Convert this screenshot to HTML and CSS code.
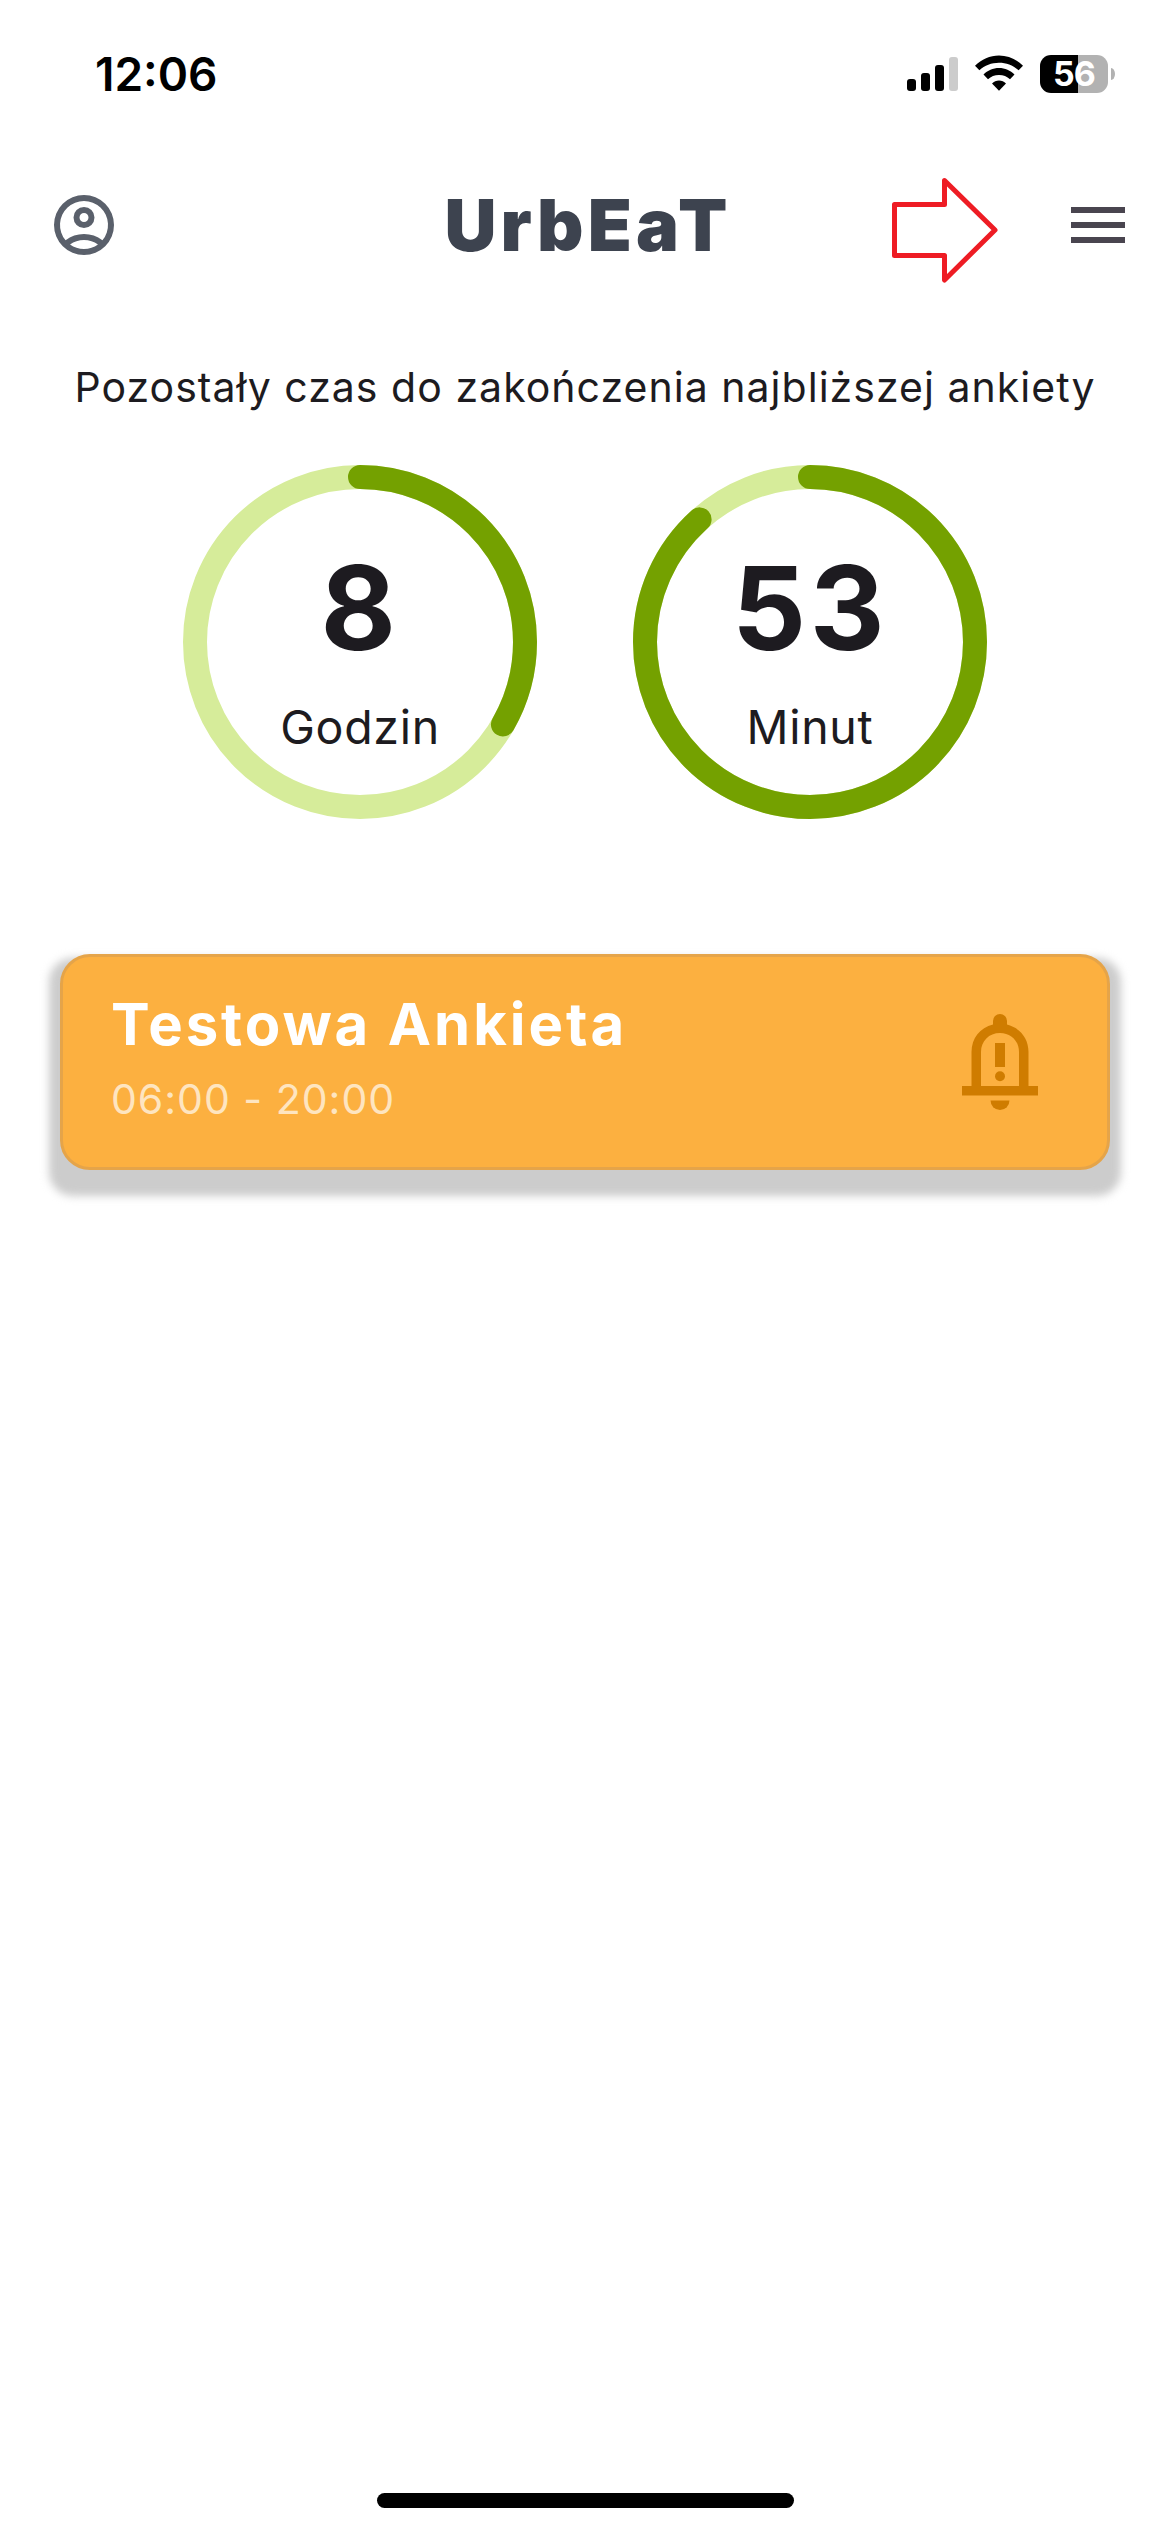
FILE: index.html
```html
<!DOCTYPE html>
<html lang="pl">
<head>
<meta charset="utf-8">
<title>UrbEaT</title>
<link rel="stylesheet" href="styles.css">
</head>
<body>
<div class="screen">
  <div class="status-bar">
    <span class="clock">12:06</span>
    <div class="status-icons">
      <svg class="signal" viewBox="0 0 51 34" width="51" height="34">
        <rect x="0" y="22" width="9" height="12" rx="3"/>
        <rect x="14" y="16" width="9" height="18" rx="3"/>
        <rect x="28" y="8" width="9" height="26" rx="3"/>
        <rect class="dim" x="42" y="0" width="9" height="34" rx="3"/>
      </svg>
      <svg class="wifi" viewBox="0 0 48 36" width="48" height="36">
        <path d="M0 10.8C6.500 4.200 15 .400 24 .400S41.500 4.200 48 10.800L43.600 15.300C38.300 10.400 31.500 7.700 24 7.700S9.700 10.400 4.400 15.300Z"/>
        <path d="M8.500 19.600C12.600 15.400 18 13 24 13S35.400 15.400 39.500 19.600L35 24.200C32 21.600 28.300 20 24 20S16 21.600 13 24.200Z"/>
        <path d="M17 28.500C18.900 26.600 21.300 25.500 24 25.500S29.100 26.600 31 28.500L24 35.800Z"/>
      </svg>
      <div class="battery">
        <span class="battery-level">56</span>
        <span class="battery-tip"></span>
      </div>
    </div>
  </div>

  <header class="app-bar">
    <svg class="account" viewBox="0 0 24 24" width="72" height="72">
      <path fill-rule="evenodd" d="M12 2a10 10 0 1 0 0 20a10 10 0 0 0 0-20ZM7.350 18.500C8.660 17.560 10.260 17 12 17s3.340.560 4.650 1.500C15.340 19.440 13.740 20 12 20s-3.340-.560-4.650-1.500ZM18.140 17.120A9.950 9.950 0 0 0 12 15a9.950 9.950 0 0 0-6.140 2.120A8 8 0 1 1 18.140 17.120ZM12 6a3.500 3.500 0 1 0 0 7a3.500 3.500 0 0 0 0-7Zm0 5a1.500 1.500 0 1 1 0-3a1.500 1.500 0 0 1 0 3Z"/>
    </svg>
    <h1 class="brand">UrbEaT</h1>
    <svg class="menu" viewBox="0 0 24 24" width="72" height="72">
      <path d="M3 6h18v2H3zM3 11h18v2H3zM3 16h18v2H3z"/>
    </svg>
    <svg class="pointer" viewBox="0 0 110 110" width="110" height="110">
      <path d="M4.500 27.500H54.500V3.500L105 53L54.500 103V78.500H4.500Z"/>
    </svg>
  </header>

  <main>
    <p class="lead">Pozostały czas do zakończenia najbliższej ankiety</p>
    <div class="timers">
      <div class="timer">
        <svg class="ring" viewBox="0 0 354 354">
          <circle class="track" cx="177" cy="177" r="165"/>
          <circle class="progress" cx="177" cy="177" r="165" pathLength="360" stroke-dasharray="120 360"/>
        </svg>
        <span class="value">8</span>
        <span class="unit">Godzin</span>
      </div>
      <div class="timer">
        <svg class="ring" viewBox="0 0 354 354">
          <circle class="track" cx="177" cy="177" r="165"/>
          <circle class="progress" cx="177" cy="177" r="165" pathLength="360" stroke-dasharray="318 360"/>
        </svg>
        <span class="value">53</span>
        <span class="unit">Minut</span>
      </div>
    </div>

    <section class="survey">
      <div class="survey-text">
        <h2 class="survey-name">Testowa Ankieta</h2>
        <p class="survey-hours">06:00 - 20:00</p>
      </div>
      <svg class="bell" viewBox="0 0 76 96" width="76" height="96">
        <path fill-rule="evenodd" d="M31 10.500V7a7 7 0 0 1 14 0V10.500C58 14 66.500 24 66.500 38V72H76V81.500H0V72H9.500V38C9.500 24 18 14 31 10.500ZM19 72H57V38C57 27 49 19 38 19S19 27 19 38Z"/>
        <rect x="33" y="29" width="10" height="24"/>
        <circle cx="38" cy="62.300" r="5"/>
        <path d="M28.500 86.500H47.500A9.500 9.500 0 0 1 28.500 86.500Z"/>
      </svg>
    </section>
  </main>
  <div class="home-indicator"></div>
</div>
</body>
</html>
```
FILE: styles.css
```css
* { box-sizing: border-box; margin: 0; padding: 0; }
body {
  background: #fff;
  color: #1d1b20;
  font-family: Inter, "Liberation Sans", sans-serif;
}
svg { display: block; flex: none; }
.screen {
  width: 1170px;
  height: 2532px;
  display: flex;
  flex-direction: column;
  align-items: center;
  overflow: hidden;
}
.status-bar {
  width: 100%;
  height: 150px;
  padding: 44px 55px 0 95px;
  display: flex;
  justify-content: space-between;
  align-items: flex-start;
  color: #000;
}
.clock { font-size: 46px; font-weight: 600; line-height: 60px; }
.status-icons { display: flex; align-items: flex-start; padding-top: 11px; }
.signal { margin: 2px 17px 0 0; }
.signal .dim { fill: #ccc; }
.wifi { margin-right: 17px; }
.battery { display: flex; align-items: center; gap: 3px; }
.battery-level {
  width: 68px;
  height: 38px;
  border-radius: 11px;
  background: linear-gradient(90deg, #000 38px, #b2b2b2 38px);
  color: #fff;
  font-size: 34px;
  font-weight: 700;
  line-height: 38px;
  letter-spacing: -1px;
  text-align: center;
}
.battery-tip { width: 4px; height: 12px; border-radius: 0 4px 4px 0 / 0 6px 6px 0; background: #b2b2b2; }

.app-bar {
  position: relative;
  width: 100%;
  height: 150px;
  padding: 0 36px 0 48px;
  display: grid;
  grid-template-columns: 72px 1fr 72px;
  align-items: center;
}
.account { fill: #5a606b; }
.brand {
  padding-right: 6px;
  color: #3d434f;
  font-size: 72px;
  font-weight: 900;
  line-height: 90px;
  letter-spacing: 4.200px;
  text-align: center;
}
.menu { fill: #49454f; }
.pointer {
  position: absolute;
  left: 890px;
  top: 27px;
  fill: none;
  stroke: #ee1c24;
  stroke-width: 5;
  stroke-linejoin: round;
}

main {
  isolation: isolate;
  width: 100%;
  display: flex;
  flex-direction: column;
  align-items: center;
}
.lead {
  margin-top: 57px;
  font-size: 41px;
  line-height: 60px;
  letter-spacing: 1.030px;
  white-space: nowrap;
}
.timers { display: flex; gap: 96px; margin-top: 48px; }
.timer {
  position: relative;
  width: 354px;
  height: 354px;
  padding-top: 73px;
  display: flex;
  flex-direction: column;
  align-items: center;
}
.ring { position: absolute; inset: 0; }
.ring circle { fill: none; stroke-width: 24; }
.ring .track { stroke: #d6ec9a; }
.ring .progress {
  stroke: #74a100;
  stroke-linecap: round;
  transform: rotate(-90deg);
  transform-origin: center;
}
.value { font-size: 116px; font-weight: 700; line-height: 140px; letter-spacing: 3.500px; }
.unit { font-size: 46.500px; line-height: 60px; margin-top: 19px; letter-spacing: .700px; }

.survey {
  position: relative;
  width: 1050px;
  height: 216px;
  margin-top: 135px;
  padding: 0 69px 0 48px;
  border: 3px solid #e5a449;
  border-radius: 30px;
  background: #fcb040;
  display: flex;
  justify-content: space-between;
  align-items: flex-start;
}
/* soft shadow, wider than the card and shifted down */
.survey::before {
  content: "";
  position: absolute;
  z-index: -1;
  inset: 1px -14px -29px;
  border-radius: 24px;
  background: #ccc;
  filter: blur(4px);
}
.survey-text { padding-top: 31px; }
.survey-name { color: #fff; font-size: 58px; font-weight: 700; line-height: 72px; letter-spacing: 2.950px; }
.survey-hours { color: #fee5c0; font-size: 41px; line-height: 50px; margin-top: 14px; letter-spacing: 1px; }
.bell { margin-top: 57px; fill: #cf7c00; }

.home-indicator {
  width: 417px;
  height: 15px;
  margin: auto 0 24px 1px;
  border-radius: 8px;
  background: #000;
}
```
